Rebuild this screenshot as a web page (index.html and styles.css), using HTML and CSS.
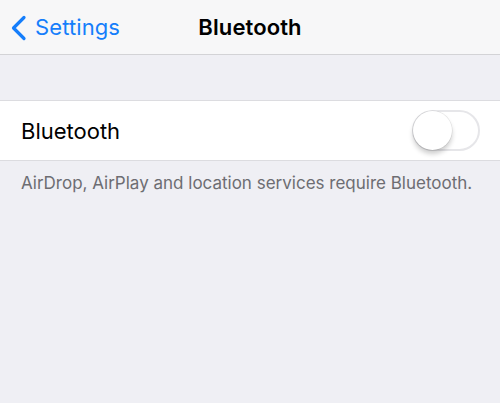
FILE: index.html
```html
<!DOCTYPE html>
<html>
<head>
<meta charset="utf-8">
<link rel="stylesheet" href="styles.css">
</head>
<body>
<header class="nav">
  <a class="back">
    <svg class="chev" width="18" height="26" viewBox="0 0 18 26"><path d="M15 2.5 L4.5 13 L15 23.5" fill="none" stroke="#157efb" stroke-width="3.2" stroke-linecap="round" stroke-linejoin="round"/></svg>
    <span>Settings</span>
  </a>
  <h1 class="title">Bluetooth</h1>
</header>
<main class="content">
  <section class="group">
    <div class="row">
      <span class="label">Bluetooth</span>
      <span class="switch"><span class="knob"></span></span>
    </div>
  </section>
  <p class="footer">AirDrop, AirPlay and location services require Bluetooth.</p>
</main>
</body>
</html>
```
FILE: styles.css
```css
* { box-sizing: border-box; }
html, body { margin: 0; padding: 0; }
body {
  width: 500px;
  height: 403px;
  background: #efeff4;
  font-family: Inter, "Noto Sans", sans-serif;
  overflow: hidden;
}
.nav {
  position: relative;
  height: 55px;
  background: #f7f7f8;
  border-bottom: 1px solid #d3d3d6;
  display: flex;
  align-items: center;
  justify-content: center;
}
.back {
  position: absolute;
  left: 9px;
  top: 0;
  height: 54px;
  display: flex;
  align-items: center;
  gap: 8px;
  color: #157efb;
  font-size: 22px;
  letter-spacing: 0.1px;
}
.chev { display: block; margin-top: 1px; }
.title {
  margin: 0;
  font-size: 22px;
  font-weight: 600;
  color: #000;
  letter-spacing: 0.1px;
}
.content { padding-top: 45px; }
.group {
  background: #fff;
  border-top: 1px solid #dcdce0;
  border-bottom: 1px solid #dcdce0;
}
.row {
  height: 59px;
  padding: 0 20px 0 21px;
  display: flex;
  align-items: center;
  justify-content: space-between;
}
.label { font-size: 22px; color: #000; }
.switch {
  position: relative;
  width: 68px;
  height: 41px;
  border-radius: 21px;
  border: 2px solid #e6e6e9;
  background: #fff;
}
.knob {
  position: absolute;
  left: -1px;
  top: -1px;
  width: 39px;
  height: 39px;
  border-radius: 50%;
  background: #fff;
  box-shadow: 0 4px 5px rgba(0,0,0,0.2), 0 0 0 0.5px rgba(0,0,0,0.1);
}
.footer {
  margin: 0;
  padding: 12px 21px 0;
  font-size: 17px;
  color: #6d6d72;
}
```
